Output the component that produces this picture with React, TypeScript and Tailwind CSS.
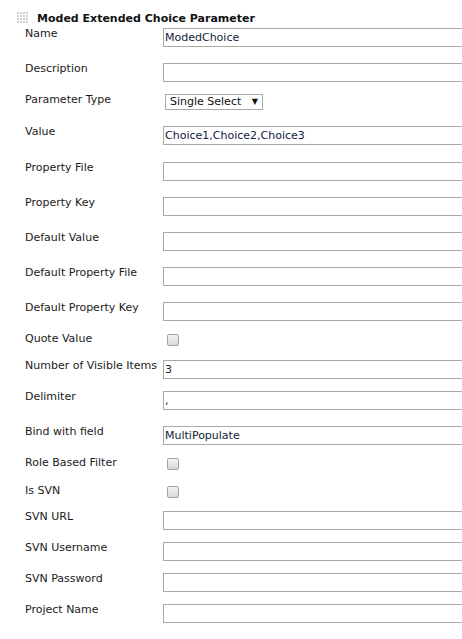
import React from "react";

type Row =
  | { label: string; kind: "text"; value?: string; h: number }
  | { label: string; kind: "check"; h: number }
  | { label: string; kind: "select"; value: string; h: number };

const rows: Row[] = [
  { label: "Name", kind: "text", value: "ModedChoice", h: 35 },
  { label: "Description", kind: "text", h: 31 },
  { label: "Parameter Type", kind: "select", value: "Single Select", h: 32 },
  { label: "Value", kind: "text", value: "Choice1,Choice2,Choice3", h: 36 },
  { label: "Property File", kind: "text", h: 35 },
  { label: "Property Key", kind: "text", h: 35 },
  { label: "Default Value", kind: "text", h: 35 },
  { label: "Default Property File", kind: "text", h: 35 },
  { label: "Default Property Key", kind: "text", h: 31 },
  { label: "Quote Value", kind: "check", h: 27 },
  { label: "Number of Visible Items", kind: "text", value: "3", h: 31 },
  { label: "Delimiter", kind: "text", value: ",", h: 35 },
  { label: "Bind with field", kind: "text", value: "MultiPopulate", h: 31 },
  { label: "Role Based Filter", kind: "check", h: 28 },
  { label: "Is SVN", kind: "check", h: 26 },
  { label: "SVN URL", kind: "text", h: 31 },
  { label: "SVN Username", kind: "text", h: 31 },
  { label: "SVN Password", kind: "text", h: 31 },
  { label: "Project Name", kind: "text", h: 31 },
];

function Grip() {
  const dots = [];
  for (let r = 0; r < 4; r++) {
    for (let c = 0; c < 4; c++) {
      dots.push(<rect key={`${r}-${c}`} x={c * 3} y={r * 3} width="2" height="2" fill="#cfcfcf" />);
    }
  }
  return (
    <svg width="12" height="12" viewBox="0 0 12 12" className="block">
      {dots}
    </svg>
  );
}

function Field({ row }: { row: Row }) {
  if (row.kind === "check") {
    return (
      <div className="shrink-0 mt-[3px] ml-[4px] w-[12px] h-[12px] rounded-[2px] border border-[#a3a3a3] bg-linear-to-b from-[#f3f3f3] to-[#d9d9d9]" />
    );
  }
  if (row.kind === "select") {
    return (
      <div className="shrink-0 mt-[2px] ml-[2px] w-[98px] h-[16px] border border-[#a9a9a9] bg-white flex items-center justify-between pl-[4px] pr-[4px] text-[11px] leading-[14px] text-[#111]">
        <span>{row.value}</span>
        <span className="text-[8px] leading-[8px]">▼</span>
      </div>
    );
  }
  return (
    <input
      readOnly
      value={row.value ?? ""}
      className="shrink-0 mt-[2px] block w-[330px] h-[19px] border border-[#a9a9a9] bg-white px-[1px] text-[11px] leading-[17px] text-[#10243a] outline-none"
      style={{ fontFamily: '"DejaVu Sans", Verdana, sans-serif' }}
    />
  );
}

export default function App() {
  return (
    <div
      className="w-[462px] h-[639px] overflow-hidden bg-white pt-[10px] text-[11px] text-[#1a1a1a]"
      style={{ fontFamily: '"DejaVu Sans", Verdana, sans-serif' }}
    >
      <div className="flex items-center h-[16px] pl-[17px] gap-[8px]">
        <Grip />
        <span className="font-bold leading-[13px] text-[#111]">Moded Extended Choice Parameter</span>
      </div>
      <div className="flex flex-col">
        {rows.map((row) => (
          <div key={row.label} className="flex items-start" style={{ height: row.h }}>
            <div className="w-[163px] shrink-0 pl-[25px] pt-[1px] leading-[13px] whitespace-nowrap">{row.label}</div>
            <Field row={row} />
          </div>
        ))}
      </div>
    </div>
  );
}
